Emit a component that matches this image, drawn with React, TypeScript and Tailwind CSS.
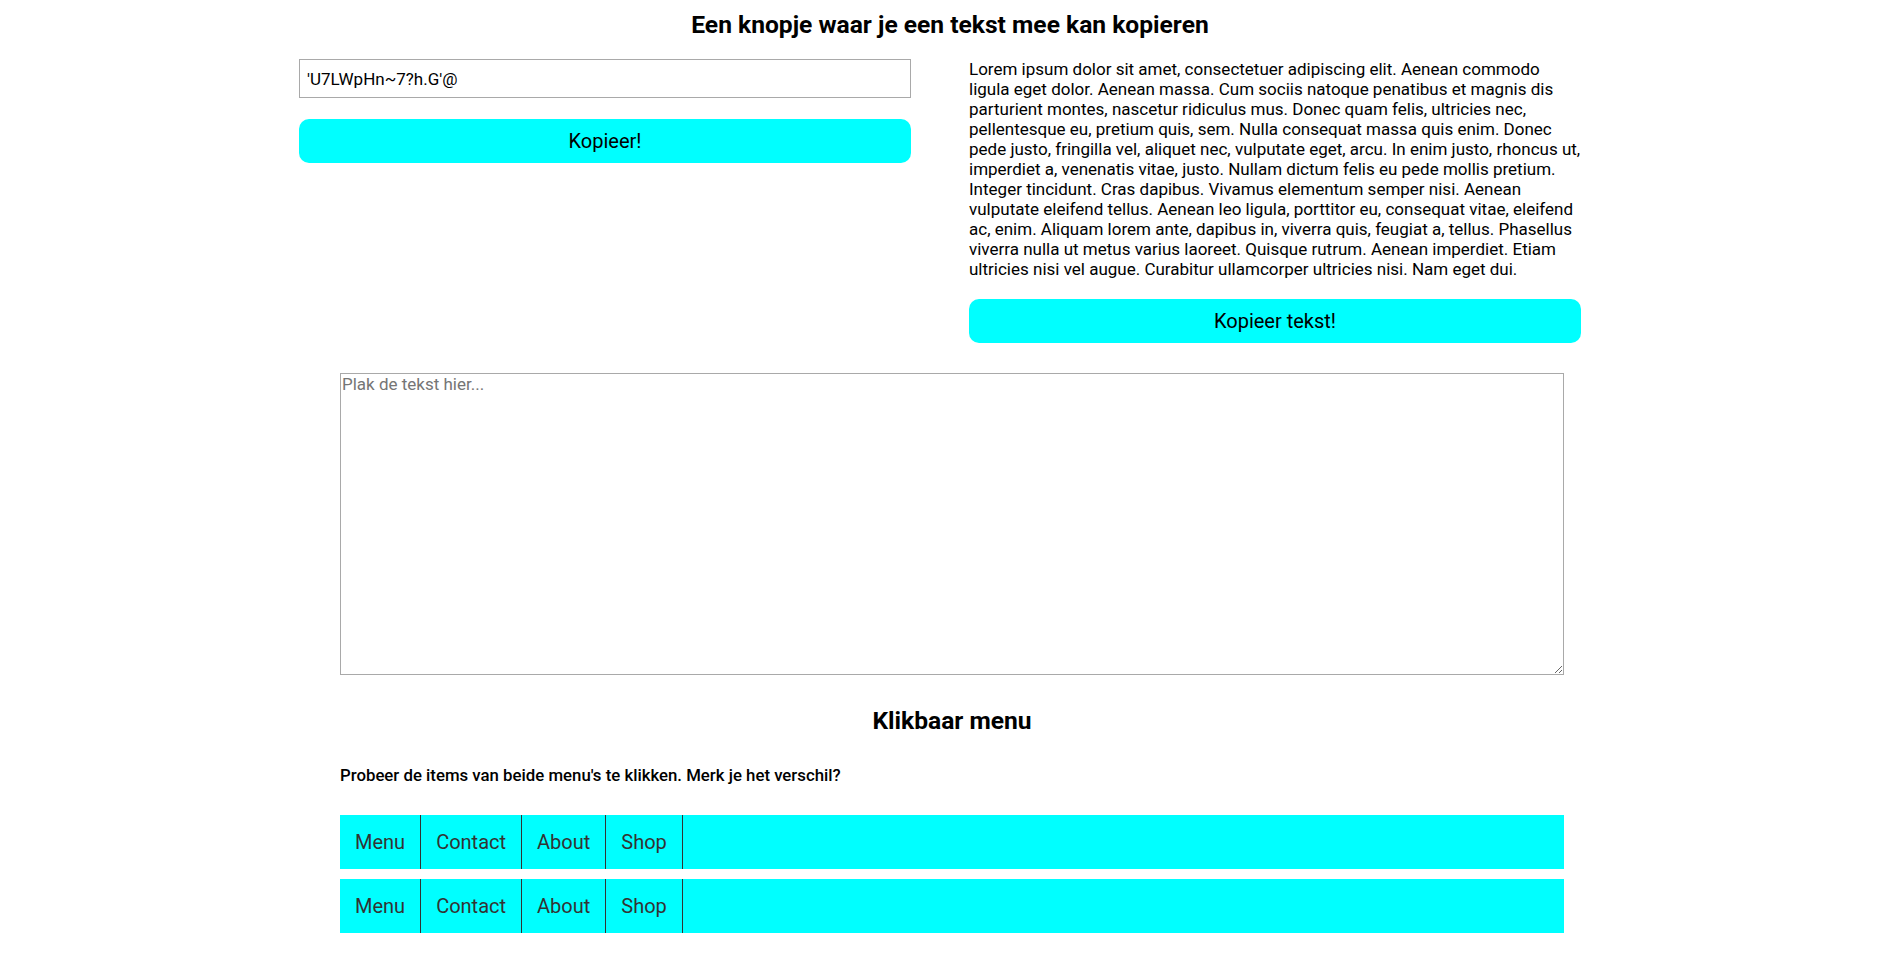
import React, { useState } from 'react';

const lorem =
  'Lorem ipsum dolor sit amet, consectetuer adipiscing elit. Aenean commodo ligula eget dolor. Aenean massa. Cum sociis natoque penatibus et magnis dis parturient montes, nascetur ridiculus mus. Donec quam felis, ultricies nec, pellentesque eu, pretium quis, sem. Nulla consequat massa quis enim. Donec pede justo, fringilla vel, aliquet nec, vulputate eget, arcu. In enim justo, rhoncus ut, imperdiet a, venenatis vitae, justo. Nullam dictum felis eu pede mollis pretium. Integer tincidunt. Cras dapibus. Vivamus elementum semper nisi. Aenean vulputate eleifend tellus. Aenean leo ligula, porttitor eu, consequat vitae, eleifend ac, enim. Aliquam lorem ante, dapibus in, viverra quis, feugiat a, tellus. Phasellus viverra nulla ut metus varius laoreet. Quisque rutrum. Aenean imperdiet. Etiam ultricies nisi vel augue. Curabitur ullamcorper ultricies nisi. Nam eget dui.';

const items = ['Menu', 'Contact', 'About', 'Shop'];

const Menu: React.FC<{ clickable?: boolean }> = ({ clickable }) => {
  const [active, setActive] = useState<string | null>(null);
  return (
    <ul className="flex h-[54px] bg-[#00ffff]">
      {items.map((item) => (
        <li
          key={item}
          onClick={() => clickable && setActive(item)}
          className={`flex items-center px-[15px] border-r border-[#333] text-[20px] text-[#333] cursor-pointer ${
            active === item ? 'bg-[#00e0e0]' : ''
          }`}
        >
          {item}
        </li>
      ))}
    </ul>
  );
};

const App: React.FC = () => {
  const [value] = useState("'U7LWpHn~7?h.G'@");
  const copy = (text: string) => {
    navigator.clipboard?.writeText(text).catch(() => {});
  };

  return (
    <div className="min-h-screen bg-white text-black font-['Roboto',_'Liberation_Sans',_sans-serif]">
      <h1 className="pt-[11px] text-center text-[24.6px] leading-[28px] font-bold">
        Een knopje waar je een tekst mee kan kopieren
      </h1>

      <div className="flex gap-[58px] pl-[299px] mt-[20px]">
        <div className="w-[612px]">
          <input
            type="text"
            readOnly
            value={value}
            className="block w-full h-[39px] px-[7px] border border-[#a9a9a9] text-[17px] text-black outline-none"
          />
          <button
            onClick={() => copy(value)}
            className="block w-full h-[44px] mt-[21px] rounded-[10px] bg-[#00ffff] text-[20px] text-black cursor-pointer"
          >
            Kopieer!
          </button>
        </div>

        <div className="w-[612px]">
          <p className="text-[17px] leading-[20px]">{lorem}</p>
          <button
            onClick={() => copy(lorem)}
            className="block w-full h-[44px] mt-[20px] rounded-[10px] bg-[#00ffff] text-[20px] text-black cursor-pointer"
          >
            Kopieer tekst!
          </button>
        </div>
      </div>

      <div className="w-[1224px] ml-[340px] mt-[30px]">
        <textarea
          placeholder="Plak de tekst hier..."
          className="block w-full h-[302px] px-[1px] py-0 border border-[#a9a9a9] text-[17px] leading-[20px] placeholder:text-[#757575] outline-none"
        />

        <h2 className="mt-[32px] text-center text-[24.6px] leading-[28px] font-bold">Klikbaar menu</h2>

        <p className="mt-[31px] text-[16.8px] leading-[19px] font-medium">
          Probeer de items van beide menu's te klikken. Merk je het verschil?
        </p>

        <div className="mt-[30px] flex flex-col gap-[10px]">
          <Menu />
          <Menu clickable />
        </div>
      </div>
    </div>
  );
};

export default App;
